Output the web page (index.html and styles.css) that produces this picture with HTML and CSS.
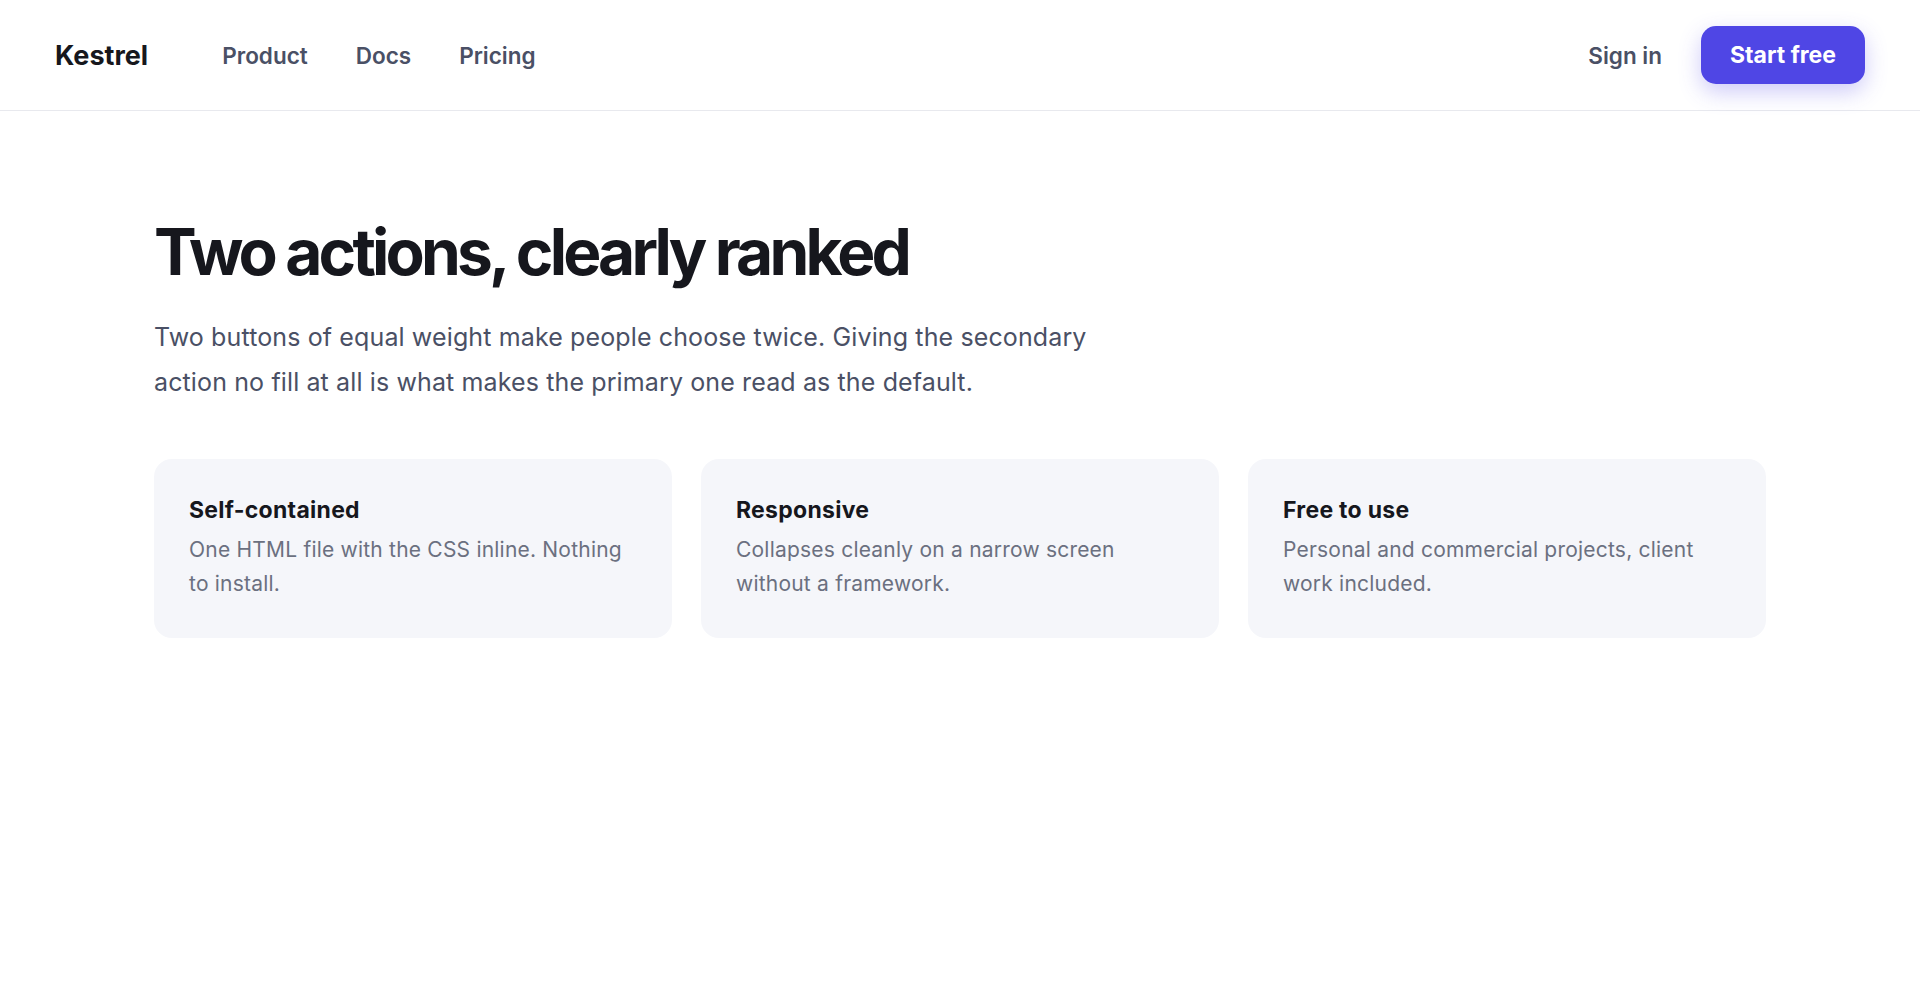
FILE: index.html
```html
<!DOCTYPE html>
<html lang="en">
<head>
<meta charset="utf-8">
<title>Kestrel</title>
<link rel="stylesheet" href="styles.css">
</head>
<body>
<header class="site-header">
  <div class="brand-nav">
    <a class="brand" href="#">Kestrel</a>
    <nav class="main-nav">
      <a href="#">Product</a>
      <a href="#">Docs</a>
      <a href="#">Pricing</a>
    </nav>
  </div>
  <div class="actions">
    <a class="sign-in" href="#">Sign in</a>
    <a class="btn-primary" href="#">Start free</a>
  </div>
</header>
<main class="hero">
  <h1 class="hero-title">Two actions, clearly ranked</h1>
  <p class="hero-lead">Two buttons of equal weight make people choose twice. Giving the secondary action no fill at all is what makes the primary one read as the default.</p>
  <section class="features">
    <article class="feature">
      <h3 class="feature-title">Self-contained</h3>
      <p class="feature-text">One HTML file with the CSS inline. Nothing to install.</p>
    </article>
    <article class="feature">
      <h3 class="feature-title">Responsive</h3>
      <p class="feature-text">Collapses cleanly on a narrow screen without a framework.</p>
    </article>
    <article class="feature">
      <h3 class="feature-title">Free to use</h3>
      <p class="feature-text">Personal and commercial projects, client work included.</p>
    </article>
  </section>
</main>
</body>
</html>
```

FILE: styles.css
```css
* { box-sizing: border-box; }

html, body {
  margin: 0;
  padding: 0;
  background: #ffffff;
}

body {
  font-family: Inter, "Noto Sans", "Liberation Sans", sans-serif;
  color: #16171d;
  -webkit-font-smoothing: antialiased;
}

a { text-decoration: none; color: inherit; }

.site-header {
  height: 111px;
  border-bottom: 1px solid #e8e9ee;
  display: flex;
  align-items: center;
  justify-content: space-between;
  padding: 0 55px 0 55px;
}

.brand-nav {
  display: flex;
  align-items: center;
  gap: 74px;
}

.brand {
  font-size: 27px;
  font-weight: 700;
  letter-spacing: 0;
  color: #16171d;
}

.main-nav {
  display: flex;
  gap: 48px;
}

.main-nav a,
.sign-in {
  font-size: 22.5px;
  font-weight: 600;
  color: #4a5065;
}

.actions {
  display: flex;
  align-items: center;
  gap: 39px;
}

.btn-primary {
  display: inline-flex;
  align-items: center;
  justify-content: center;
  height: 58px;
  padding: 0 29px;
  border-radius: 15px;
  background: #4f46e5;
  color: #ffffff;
  font-size: 23px;
  font-weight: 700;
  box-shadow: 0 8px 22px rgba(79, 70, 229, 0.28);
}

.hero {
  max-width: 1612px;
  margin: 0 auto;
  padding-top: 106px;
}

.hero-title {
  margin: 0;
  font-size: 64px;
  line-height: 1.1;
  font-weight: 700;
  letter-spacing: -0.06em;
  color: #16171d;
}

.hero-lead {
  margin: 28px 0 0;
  max-width: 980px;
  font-size: 25px;
  line-height: 45px;
  letter-spacing: 0.005em;
  color: #4a5065;
}

.features {
  margin-top: 54px;
  display: grid;
  grid-template-columns: repeat(3, 1fr);
  gap: 29px;
}

.feature {
  background: #f5f6fa;
  border-radius: 18px;
  padding: 36px 35px 37px;
}

.feature-title {
  margin: 0 0 8px;
  font-size: 23px;
  line-height: 30px;
  font-weight: 700;
  letter-spacing: 0.012em;
  color: #16171d;
}

.feature-text {
  margin: 0;
  font-size: 21px;
  line-height: 34px;
  letter-spacing: 0.01em;
  color: #6b7080;
}
```
